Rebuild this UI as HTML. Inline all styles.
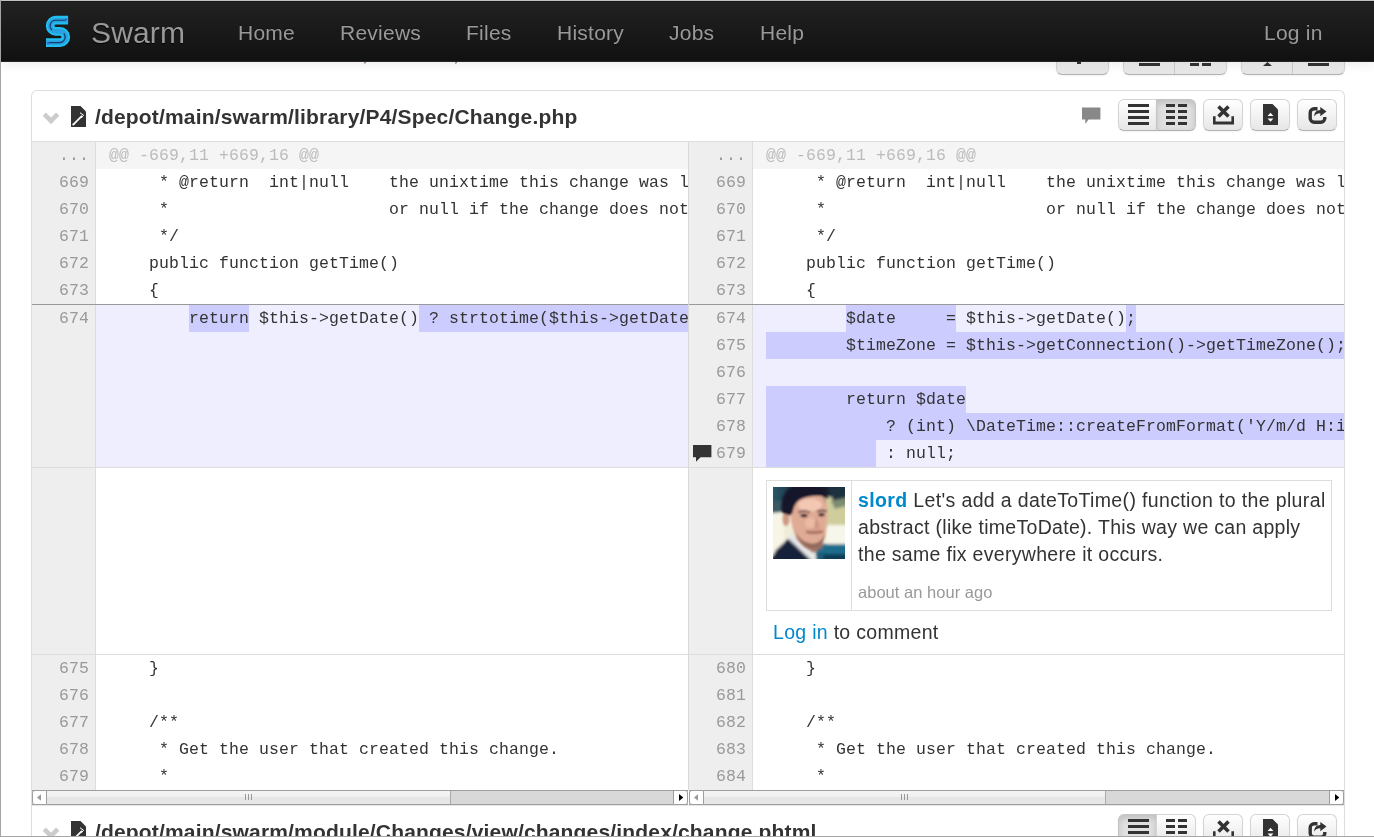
<!DOCTYPE html>
<html lang="en">
<head>
<meta charset="utf-8">
<title>Swarm - Review</title>
<style>
*{box-sizing:border-box;}
html,body{margin:0;padding:0;}
body{width:1374px;height:837px;overflow:hidden;background:#fff;position:relative;
  font-family:"Liberation Sans",Arial,sans-serif;font-size:21px;line-height:30px;color:#333;}
a{color:#0088cc;text-decoration:none;}
.frame{position:absolute;left:0;top:0;width:1374px;height:837px;pointer-events:none;z-index:50;}
.frame i{position:absolute;display:block;}
.frame .ft{left:0;top:0;width:1374px;height:1px;background:#c0c2c0;}
.frame .fl{left:0;top:0;width:1px;height:837px;background:#a4a4a4;}
.frame .fb{left:0;top:836px;width:1374px;height:1px;background:#a6a6a6;}
/* navbar */
.navbar{position:absolute;left:1px;top:1px;width:1373px;height:61px;background:linear-gradient(#222222,#111111);border-bottom:1px solid #252525;box-shadow:0 1px 12px rgba(0,0,0,.1),inset 0 1px 0 #181818;z-index:20;}
.navbar .logo{position:absolute;left:37px;top:9px;}
.navbar .brand{will-change:transform;position:absolute;left:90px;top:0;height:60px;line-height:64px;font-size:30px;color:#999;text-shadow:0 1px 0 #000;letter-spacing:.15px;}
.navbar .nav a{will-change:transform;position:absolute;top:0;height:60px;line-height:63px;font-size:21px;color:#999;text-shadow:0 -1px 0 rgba(0,0,0,.25);white-space:nowrap;letter-spacing:.25px;}
.peek{position:absolute;top:39px;font-size:21px;line-height:30px;color:#666;}
/* toolbar peeking */
.tbtn{position:absolute;top:40px;height:35px;border:1px solid #ccc;border-color:#d6d6d6 #d6d6d6 #b3b3b3;border-radius:6px;background:linear-gradient(#fff,#e6e6e6);box-shadow:0 1px 2px rgba(0,0,0,.05);}
.tbtn i{position:absolute;background:#333;display:block;}
.tbtn b{position:absolute;top:0;width:1px;height:33px;background:#ccc;display:block;}
/* file panel */
.panel{position:absolute;left:31px;width:1314px;border:1px solid #ddd;border-bottom:0;border-radius:6px 6px 0 0;background:#fff;}
.phead{position:absolute;left:0;width:1312px;height:49px;}
.phead .title{position:absolute;left:63px;top:10px;font-size:21px;line-height:30px;font-weight:bold;color:#333;white-space:nowrap;letter-spacing:.17px;}
.phead svg{position:absolute;}
.btn{position:absolute;top:7px;height:32px;border:1px solid #ccc;border-color:#d4d4d4 #d4d4d4 #b3b3b3;border-radius:6px;background:linear-gradient(#ffffff,#e6e6e6);box-shadow:inset 0 1px 0 rgba(255,255,255,.2),0 1px 2px rgba(0,0,0,.05);}
.btn.l{border-radius:6px 0 0 6px;}
.btn.r{border-radius:0 6px 6px 0;}
.btn.active{background:#e0e0e0;box-shadow:inset 0 3px 6px rgba(0,0,0,.15),0 1px 2px rgba(0,0,0,.05);border-color:#c4c4c4 #c4c4c4 #b0b0b0;}
.btn svg{position:absolute;left:0;top:0;}
.pin{will-change:transform;position:absolute;left:0;top:1px;width:1312px;height:750px;}
/* diff */
.dtop{position:absolute;left:0;top:49px;width:1312px;height:1px;background:#ddd;}
.pdiv{position:absolute;left:656px;top:50px;width:1px;height:648px;background:#d9d9d9;}
.pane{position:absolute;top:50px;height:648px;overflow:hidden;font-family:"Liberation Mono","DejaVu Sans Mono",monospace;font-size:16.5px;line-height:27px;color:#333;letter-spacing:.1px;}
.row{position:absolute;left:0;width:100%;height:27px;white-space:pre;}
.ln{position:absolute;left:0;top:0;width:64px;height:100%;background:#eeeeee;border-right:1px solid #dddddd;color:#999;text-align:right;padding-right:6px;}
.cd{position:absolute;left:64px;top:0;right:0;height:100%;padding-left:13px;overflow:hidden;}
.meta .cd{background:#f5f5f5;color:#bbb;}
.chg .cd{background:#eeeeff;}
.hl{background:#ccccff;display:inline-block;height:27px;vertical-align:top;}
.sep{position:absolute;left:0;width:100%;height:1px;background:#999;z-index:3;}
.sep2{position:absolute;left:0;width:100%;height:1px;background:#ddd;z-index:3;}
.cmi{position:absolute;left:4px;top:5.4px;}
/* comment */
.cbox{position:absolute;left:77px;top:338px;width:566px;height:131px;border:1px solid #ddd;background:#fff;font-family:"Liberation Sans",Arial,sans-serif;white-space:normal;letter-spacing:0;}
.cbox:before{content:"";position:absolute;left:84px;top:0;width:1px;height:129px;background:#ddd;}
.avatar{position:absolute;left:6px;top:6px;width:72px;height:72px;}
.ctext{position:absolute;left:91px;top:6px;width:480px;font-size:19.5px;line-height:27px;color:#333;white-space:nowrap;letter-spacing:.18px;}
.ctext .user{font-weight:bold;color:#0088cc;}
.ctime{position:absolute;left:91px;top:98px;font-size:16.5px;line-height:27px;color:#999;white-space:nowrap;letter-spacing:.03px;}
.login{position:absolute;left:84px;top:477px;font-family:"Liberation Sans",Arial,sans-serif;font-size:19.5px;line-height:27px;color:#333;white-space:nowrap;letter-spacing:.3px;}
/* scrollbars */
.sb{position:absolute;top:698px;height:15px;border-top:1px solid #9e9e9e;border-bottom:1px solid #9e9e9e;background:#d8d8d8;}
.sb .al,.sb .ar{position:absolute;top:-1px;width:15px;height:15px;background:#fff;border:1px solid #9e9e9e;}
.sb .al{left:0;border-radius:3px 0 0 3px;}
.sb .ar{right:0;border-radius:0 3px 3px 0;}
.sb .al:after{content:"";position:absolute;left:4px;top:3px;width:4.3px;height:7px;background:#999;clip-path:polygon(100% 0,0 50%,100% 100%);}
.sb .ar:after{content:"";position:absolute;left:5px;top:3px;width:4.3px;height:7px;background:#000;clip-path:polygon(0 0,100% 50%,0 100%);}
.sb .th{position:absolute;top:0;height:13px;background:linear-gradient(#f4f4f4 0,#f0f0f0 45%,#e6e6e6 50%,#e8e8e8 100%);border-right:1px solid #aaa;}
.sb .gr{position:absolute;top:3px;width:7px;height:6px;background:repeating-linear-gradient(90deg,#999 0,#999 1px,transparent 1px,transparent 3px);}
.pbot{position:absolute;left:0;top:713px;width:1312px;height:1px;background:#e6e6e6;}
</style>
</head>
<body>
<div class="navbar">
  <svg class="logo" viewBox="38 10 42 42" width="42" height="42">
    <path d="M68.100 20.200H55.750A5.600 5.600 0 0 0 55.750 31.400H60.150A5.600 5.600 0 0 1 60.150 42.600H46" fill="none" stroke="#1fc0f1" stroke-width="8.700"/>
    <path d="M68.100 20.200H55.750A5.600 5.600 0 0 0 55.750 31.400H60.150A5.600 5.600 0 0 1 60.150 42.600H46" fill="none" stroke="#2aa2e2" stroke-width="4.600"/>
    <path d="M65.500 20.200H55.750A5.600 5.600 0 0 0 52 30" fill="none" stroke="#0b2c55" stroke-width="1.100" opacity=".85"/>
    <path d="M63.800 33.400A5.600 5.600 0 0 1 60.150 42.600H49" fill="none" stroke="#0b2c55" stroke-width="1.100" opacity=".85"/>
    <circle cx="66" cy="19.400" r="1" fill="#2b55c8"/><circle cx="48.100" cy="43.200" r="1" fill="#2b55c8"/>
  </svg>
  <span class="brand">Swarm</span>
  <div class="nav">
    <a style="left:237px">Home</a>
    <a style="left:339px">Reviews</a>
    <a style="left:465px">Files</a>
    <a style="left:556px">History</a>
    <a style="left:668px">Jobs</a>
    <a style="left:759px">Help</a>
    <a style="left:1263px">Log in</a>
  </div>
</div>

<span class="peek" style="left:362px">,</span>
<span class="peek" style="left:453px">,</span>

<!-- toolbar buttons peeking under navbar -->
<div class="tbtn" style="left:1056px;width:53px;"><i style="left:20px;top:21px;width:4px;height:2px"></i></div>
<div class="tbtn" style="left:1123px;width:104px;"><b style="left:50px"></b><i style="left:15px;top:22px;width:21px;height:3px"></i><i style="left:66px;top:22px;width:9px;height:3px"></i><i style="left:78px;top:22px;width:9px;height:3px"></i></div>
<div class="tbtn" style="left:1241px;width:104px;"><b style="left:50px"></b><i style="left:21px;top:21px;width:9px;height:4px;clip-path:polygon(50% 0,100% 100%,0 100%)"></i><i style="left:66px;top:22px;width:21px;height:3px"></i></div>

<div class="panel" id="p1" style="top:90px;height:760px;">
<div class="pin">
  <div class="phead" style="top:0">
    <svg style="left:10px;top:19px" width="18" height="14" viewBox="0 0 18 14"><path d="M2.3 3.2 L9 9.9 L15.7 3.2" fill="none" stroke="#ccc" stroke-width="4.6"/></svg>
    <svg style="left:39px;top:14px" width="16" height="21" viewBox="0 0 16 21"><path d="M0 0H9.5L15 5.5V20.4Q15 21 14.4 21H.6Q0 21 0 20.4Z" fill="#333"/><path d="M2.2 18.6L11 9.9" stroke="#fff" stroke-width="1.7" fill="none"/><path d="M9 6.8L12.6 9.2L10.2 12" stroke="#fff" stroke-width="1" fill="none"/><circle cx="2.3" cy="18.5" r="1" fill="#fff"/></svg>
    <span class="title">/depot/main/swarm/library/P4/Spec/Change.php</span>
    <svg style="left:1050px;top:15px" width="19" height="18" viewBox="0 0 19 18"><path d="M0 .5H18.4V12.4H6.5L3.3 17V12.4H0Z" fill="#888"/></svg>
    <div class="btn l" style="left:1086px;width:39px"><svg width="39" height="32" viewBox="0 0 39 32"><path d="M9 4h21v3H9zM9 10h21v3H9zM9 16h21v3H9zM9 22h21v3H9z" fill="#333"/></svg></div>
    <div class="btn r active" style="left:1124px;width:40px"><svg width="40" height="32" viewBox="0 0 40 32"><path d="M9 4h9v3H9zM9 10h9v3H9zM9 16h9v3H9zM9 22h9v3H9zM21 4h9v3h-9zM21 10h9v3h-9zM21 16h9v3h-9zM21 22h9v3h-9z" fill="#333"/></svg></div>
    <div class="btn" style="left:1171px;width:40px"><svg width="40" height="32" viewBox="0 0 40 32"><path d="M9 16.200v8.300h21v-8.300h-2.600v5.200h-15.800v-5.200z" fill="#333"/><path d="M14.5 6.5L24.5 16.5M24.5 6.5L14.5 16.5" stroke="#333" stroke-width="3.600" fill="none"/></svg></div>
    <div class="btn" style="left:1218px;width:40px"><svg width="40" height="32" viewBox="0 0 40 32"><path d="M12 4h9.5L27 9.5V25H12z" fill="#333"/><path d="M19.500 12.800l2.900 3.300h-5.800zM19.500 21.800l2.900-3.300h-5.800z" fill="#fff"/></svg></div>
    <div class="btn" style="left:1265px;width:40px"><svg width="40" height="32" viewBox="0 0 40 32"><path d="M19.500 8.700H16.200a4 4 0 0 0-4 4v5.600a4 4 0 0 0 4 4h6.600a4 4 0 0 0 4-4v-1.300" fill="none" stroke="#333" stroke-width="3.400"/><path d="M22.300 7l6.200 4.600-6.200 4.600v-2.900c-2.800 0-4.700 1-6.100 3.300 0-3.900 2-6.700 6.100-6.700z" fill="#333"/></svg></div>
  </div>
  <div class="dtop"></div>
  <div class="pane" style="left:0;width:656px">
<div class="row meta" style="top:0px"><span class="ln">...</span><span class="cd">@@ -669,11 +669,16 @@</span></div>
<div class="row " style="top:27px"><span class="ln">669</span><span class="cd">     * @return  int|null    the unixtime this change was last modified</span></div>
<div class="row " style="top:54px"><span class="ln">670</span><span class="cd">     *                      or null if the change does not exist</span></div>
<div class="row " style="top:81px"><span class="ln">671</span><span class="cd">     */</span></div>
<div class="row " style="top:108px"><span class="ln">672</span><span class="cd">    public function getTime()</span></div>
<div class="row " style="top:135px"><span class="ln">673</span><span class="cd">    {</span></div>
<div class="sep" style="top:162px"></div>
<div class="row chg" style="top:163px;height:162px"><span class="ln">674</span><span class="cd">        <span class="hl">return</span> $this-&gt;getDate()<span class="hl"> ? strtotime($this-&gt;getDate()) : null;</span></span></div>
<div class="sep2" style="top:325px"></div>
<div class="row crow" style="top:326px;height:186px"><span class="ln"></span><span class="cd"></span></div>
<div class="sep2" style="top:512px"></div>
<div class="row " style="top:513px"><span class="ln">675</span><span class="cd">    }</span></div>
<div class="row " style="top:540px"><span class="ln">676</span><span class="cd"></span></div>
<div class="row " style="top:567px"><span class="ln">677</span><span class="cd">    /**</span></div>
<div class="row " style="top:594px"><span class="ln">678</span><span class="cd">     * Get the user that created this change.</span></div>
<div class="row " style="top:621px"><span class="ln">679</span><span class="cd">     *</span></div>

  </div>
  <div class="pdiv"></div>
  <div class="pane" style="left:657px;width:655px">
<div class="row meta" style="top:0px"><span class="ln">...</span><span class="cd">@@ -669,11 +669,16 @@</span></div>
<div class="row " style="top:27px"><span class="ln">669</span><span class="cd">     * @return  int|null    the unixtime this change was last modified</span></div>
<div class="row " style="top:54px"><span class="ln">670</span><span class="cd">     *                      or null if the change does not exist</span></div>
<div class="row " style="top:81px"><span class="ln">671</span><span class="cd">     */</span></div>
<div class="row " style="top:108px"><span class="ln">672</span><span class="cd">    public function getTime()</span></div>
<div class="row " style="top:135px"><span class="ln">673</span><span class="cd">    {</span></div>
<div class="sep" style="top:162px"></div>
<div class="row chg" style="top:163px"><span class="ln">674</span><span class="cd">        <span class="hl">$date     =</span> $this-&gt;getDate()<span class="hl">;</span></span></div>
<div class="row chg" style="top:190px"><span class="ln">675</span><span class="cd"><span class="hl">        $timeZone = $this-&gt;getConnection()-&gt;getTimeZone();</span></span></div>
<div class="row chg" style="top:217px"><span class="ln">676</span><span class="cd"></span></div>
<div class="row chg" style="top:244px"><span class="ln">677</span><span class="cd"><span class="hl">        </span><span class="hl">return $date</span></span></div>
<div class="row chg" style="top:271px"><span class="ln">678</span><span class="cd"><span class="hl">            ? (int) \DateTime::createFromFormat('Y/m/d H:i:s', $date, $timeZone)-&gt;getTimestamp()</span></span></div>
<div class="row chg" style="top:298px"><span class="ln"><svg class="cmi" viewBox="0 0 19 17" width="19" height="17"><path d="M0 0H18.400V12.300H7.500L3 16.800V12.300H0Z" fill="#333"/></svg>679</span><span class="cd"><span class="hl">           </span> : null;</span></div>
<div class="sep2" style="top:325px"></div>
<div class="row crow" style="top:326px;height:186px"><span class="ln"></span><span class="cd"></span></div>
<div class="cbox">
  <svg class="avatar" viewBox="0 0 72 72" width="72" height="72">
<defs>
<filter id="b1" x="-20%" y="-20%" width="140%" height="140%"><feGaussianBlur stdDeviation="1.5"/></filter>
<filter id="b2" x="-20%" y="-20%" width="140%" height="140%"><feGaussianBlur stdDeviation="0.8"/></filter>
<filter id="b3" x="-30%" y="-30%" width="160%" height="160%"><feGaussianBlur stdDeviation="2.2"/></filter>
<linearGradient id="bgt" x1="0" y1="0" x2="1" y2="0"><stop offset="0" stop-color="#2c5f70"/><stop offset="0.3" stop-color="#1b3445"/><stop offset="0.7" stop-color="#15202e"/><stop offset="1" stop-color="#274b5b"/></linearGradient>
<clipPath id="avc"><rect width="72" height="72"/></clipPath>
</defs>
<g clip-path="url(#avc)">
<rect width="72" height="72" fill="#efecd8"/>
<g filter="url(#b1)">
<rect x="-5" y="-5" width="82" height="22" fill="url(#bgt)"/>
<path d="M-4 14H14V24L-4 27Z" fill="#3a5a64"/>
<rect x="-4" y="26" width="15" height="42" fill="#f8f5e6"/>
<rect x="52" y="10" width="24" height="30" fill="#cfcd9c"/>
<path d="M54 -4H76V12L60 14Z" fill="#1c3040"/>
<path d="M58 14L76 10V18L62 22Z" fill="#7e8c72"/>
<rect x="54" y="38" width="22" height="20" fill="#f7f6ea"/>
<rect x="44" y="57" width="32" height="20" fill="#1d6d8c"/>
<rect x="44" y="67" width="32" height="10" fill="#0f3d55"/>
<path d="M-4 76L3 63L16 51L44 76Z" fill="#15233b"/>
<path d="M14.500 51L19 47L46 73L41 76Z" fill="#e6e7ea"/>
<path d="M43 76L43 64L51 69L49 76Z" fill="#1e5c7c"/>
<path d="M22 50L40 66L50 60L48 50Z" fill="#9a6e5e"/>
</g>
<g filter="url(#b2)">
<ellipse cx="13" cy="32" rx="3.400" ry="7" fill="#cf9883"/>
<path d="M17 20C17 8 28 3 38 4C49 5 55 12 54.500 26C54.500 42 51 57 44 61.500C38 65 30 61 25 53C19.500 45 17 32 17 20Z" fill="#e0ab95"/>
<ellipse cx="37" cy="18" rx="12" ry="6.500" fill="#f2c8b2"/>
<ellipse cx="38" cy="36" rx="6" ry="5" fill="#ecbaa4"/>
<path d="M22 44C25 54 32 63 41 62.500C48 61 51 54 53 44C50 53 45 57 39 56.500C31 56 26 51 22 44Z" fill="#946a5c"/>
<path d="M8.500 23C7 8 16 -3 30 -4C43 -5 53 -1 55 12C51 8 44 8.500 36 9.500C28 11 22.500 14 20.500 22C19.500 26 18.500 29 16 28C12 27 9 27 8.500 23Z" fill="#15172a"/>
<path d="M25.500 25.500Q31 22.500 37 25.500" stroke="#33262a" stroke-width="1.700" fill="none"/>
<path d="M44 24.500Q49 22.500 53.500 24.500" stroke="#33262a" stroke-width="1.700" fill="none"/>
<ellipse cx="31" cy="28.500" rx="3.600" ry="1.800" fill="#241c22"/>
<ellipse cx="48.500" cy="27.800" rx="3.200" ry="1.700" fill="#241c22"/>
<path d="M43 29L41 41L47 41.500Z" fill="#cc9682"/>
<path d="M33 43.500Q41 42.500 50 43L50 45Q41 47 33 45.500Z" fill="#c48c7a"/>
<path d="M33 45.200Q41 47.400 50 44.800" stroke="#8a4a44" stroke-width="1.300" fill="none"/>
</g>
</g>
</svg>
  <div class="ctext"><span style="letter-spacing:.36px"><a class="user">slord</a> Let's add a dateToTime() function to the plural</span><br><span style="letter-spacing:.3px">abstract (like timeToDate). This way we can apply</span><br><span style="letter-spacing:.31px">the same fix everywhere it occurs.</span></div>
  <div class="ctime">about an hour ago</div>
</div>
<div class="login"><a>Log in</a> to comment</div>
<div class="sep2" style="top:512px"></div>
<div class="row " style="top:513px"><span class="ln">680</span><span class="cd">    }</span></div>
<div class="row " style="top:540px"><span class="ln">681</span><span class="cd"></span></div>
<div class="row " style="top:567px"><span class="ln">682</span><span class="cd">    /**</span></div>
<div class="row " style="top:594px"><span class="ln">683</span><span class="cd">     * Get the user that created this change.</span></div>
<div class="row " style="top:621px"><span class="ln">684</span><span class="cd">     *</span></div>

  </div>
  <div class="sb" style="left:0;width:656px"><div class="th" style="left:15px;width:404px"></div><div class="gr" style="left:213px"></div><div class="al"></div><div class="ar"></div></div>
  <div class="sb" style="left:657px;width:655px"><div class="th" style="left:15px;width:402px"></div><div class="gr" style="left:212px"></div><div class="al"></div><div class="ar"></div></div>
  <div class="pbot"></div>
  <div class="phead" style="top:715px">
    <svg style="left:10px;top:19px" width="18" height="14" viewBox="0 0 18 14"><path d="M2.3 3.2 L9 9.9 L15.7 3.2" fill="none" stroke="#ccc" stroke-width="4.6"/></svg>
    <svg style="left:39px;top:14px" width="16" height="21" viewBox="0 0 16 21"><path d="M0 0H9.5L15 5.5V20.4Q15 21 14.4 21H.6Q0 21 0 20.4Z" fill="#333"/><path d="M2.2 18.6L11 9.9" stroke="#fff" stroke-width="1.7" fill="none"/><path d="M9 6.8L12.6 9.2L10.2 12" stroke="#fff" stroke-width="1" fill="none"/><circle cx="2.3" cy="18.5" r="1" fill="#fff"/></svg>
    <span class="title">/depot/main/swarm/module/Changes/view/changes/index/change.phtml</span>
    <div class="btn l active" style="left:1086px;width:39px"><svg width="39" height="32" viewBox="0 0 39 32"><path d="M9 4h21v3H9zM9 10h21v3H9zM9 16h21v3H9zM9 22h21v3H9z" fill="#333"/></svg></div>
    <div class="btn r" style="left:1124px;width:40px"><svg width="40" height="32" viewBox="0 0 40 32"><path d="M9 4h9v3H9zM9 10h9v3H9zM9 16h9v3H9zM9 22h9v3H9zM21 4h9v3h-9zM21 10h9v3h-9zM21 16h9v3h-9zM21 22h9v3h-9z" fill="#333"/></svg></div>
    <div class="btn" style="left:1171px;width:40px"><svg width="40" height="32" viewBox="0 0 40 32"><path d="M9 16.200v8.300h21v-8.300h-2.600v5.200h-15.800v-5.200z" fill="#333"/><path d="M14.500 6.500L24.500 16.500M24.500 6.500L14.500 16.500" stroke="#333" stroke-width="3.600" fill="none"/></svg></div>
    <div class="btn" style="left:1218px;width:40px"><svg width="40" height="32" viewBox="0 0 40 32"><path d="M12 4h9.500L27 9.500V25H12z" fill="#333"/><path d="M19.500 12.800l2.900 3.300h-5.800zM19.500 21.800l2.900-3.300h-5.800z" fill="#fff"/></svg></div>
    <div class="btn" style="left:1265px;width:40px"><svg width="40" height="32" viewBox="0 0 40 32"><path d="M19.500 8.700H16.200a4 4 0 0 0-4 4v5.600a4 4 0 0 0 4 4h6.600a4 4 0 0 0 4-4v-1.300" fill="none" stroke="#333" stroke-width="3.400"/><path d="M22.300 7l6.200 4.600-6.200 4.600v-2.900c-2.800 0-4.700 1-6.100 3.300 0-3.900 2-6.700 6.100-6.700z" fill="#333"/></svg></div>
  </div>
</div>
</div>

<div class="frame"><i class="ft"></i><i class="fb"></i><i class="fl"></i></div>
</body>
</html>
